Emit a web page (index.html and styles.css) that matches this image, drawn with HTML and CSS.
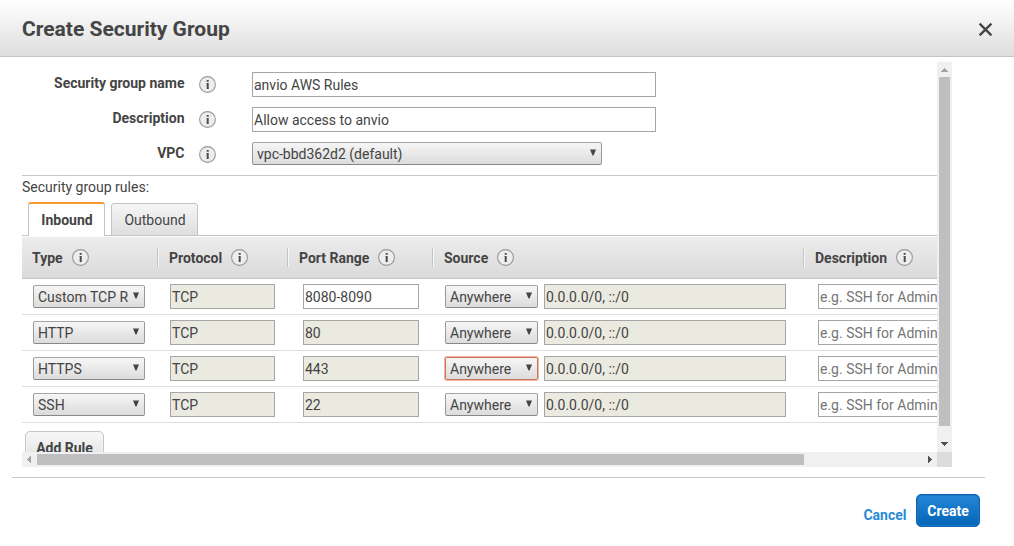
FILE: index.html
```html
<!DOCTYPE html>
<html lang="en">
<head>
<meta charset="utf-8">
<title>Create Security Group</title>
<link rel="stylesheet" href="styles.css">
</head>
<body>
<svg width="0" height="0" class="defs" aria-hidden="true">
  <symbol id="info" viewBox="0 0 17 17">
    <circle cx="8.5" cy="8.5" r="7.9" fill="#ededed" stroke="#999" stroke-width="1.1"/>
    <path d="M7.7 4h2v1.8h-2zM7.7 7h2v6h-2z" fill="#4a4a4a"/>
    <path d="M7 7h.7v.9H7z" fill="#999"/>
  </symbol>
  <symbol id="caret" viewBox="0 0 6 7">
    <path d="M0 0.5h6L3.5 6.5h-1z" fill="#444"/>
  </symbol>
</svg>
<div class="dialog">
  <header class="dialog-header">
    <h1>Create Security Group</h1>
    <svg class="close" viewBox="0 0 13 13"><path d="M0.6 0.6L12.4 12.4M12.4 0.6L0.6 12.4" stroke="#444" stroke-width="2.3" fill="none"/></svg>
  </header>

  <main class="scroller">
    <div class="viewport">
      <section class="form">
        <div class="form-row"><label>Security group name</label><svg class="info"><use href="#info"/></svg><div class="input">anvio AWS Rules</div></div>
        <div class="form-row"><label>Description</label><svg class="info"><use href="#info"/></svg><div class="input">Allow access to anvio</div></div>
        <div class="form-row"><label>VPC</label><svg class="info"><use href="#info"/></svg><div class="select vpc"><span>vpc-bbd362d2 (default)</span><svg class="caret"><use href="#caret"/></svg></div></div>
      </section>
      <div class="rules-title">Security group rules:</div>
      <nav class="tabs"><div class="tab active">Inbound</div><div class="tab">Outbound</div></nav>
      <section class="table">
        <div class="table-head">
          <div class="th">Type<svg class="info"><use href="#info"/></svg></div>
          <div class="th">Protocol<svg class="info"><use href="#info"/></svg></div>
          <div class="th">Port Range<svg class="info"><use href="#info"/></svg></div>
          <div class="th">Source<svg class="info"><use href="#info"/></svg></div>
          <div class="th">Description<svg class="info"><use href="#info"/></svg></div>
        </div>
        <div class="table-row">
          <div class="select"><span>Custom TCP R</span><svg class="caret"><use href="#caret"/></svg></div>
          <div class="input off">TCP</div><div class="input">8080-8090</div>
          <div class="select"><span>Anywhere</span><svg class="caret"><use href="#caret"/></svg></div>
          <div class="input off">0.0.0.0/0, ::/0</div><div class="input hint">e.g. SSH for Admin</div>
        </div>
        <div class="table-row">
          <div class="select"><span>HTTP</span><svg class="caret"><use href="#caret"/></svg></div>
          <div class="input off">TCP</div><div class="input off">80</div>
          <div class="select"><span>Anywhere</span><svg class="caret"><use href="#caret"/></svg></div>
          <div class="input off">0.0.0.0/0, ::/0</div><div class="input hint">e.g. SSH for Admin</div>
        </div>
        <div class="table-row">
          <div class="select"><span>HTTPS</span><svg class="caret"><use href="#caret"/></svg></div>
          <div class="input off">TCP</div><div class="input off">443</div>
          <div class="select focus"><span>Anywhere</span><svg class="caret"><use href="#caret"/></svg></div>
          <div class="input off">0.0.0.0/0, ::/0</div><div class="input hint">e.g. SSH for Admin</div>
        </div>
        <div class="table-row">
          <div class="select"><span>SSH</span><svg class="caret"><use href="#caret"/></svg></div>
          <div class="input off">TCP</div><div class="input off">22</div>
          <div class="select"><span>Anywhere</span><svg class="caret"><use href="#caret"/></svg></div>
          <div class="input off">0.0.0.0/0, ::/0</div><div class="input hint">e.g. SSH for Admin</div>
        </div>
      </section>
      <div class="add-rule">Add Rule</div>
    </div>
    <div class="vbar">
      <svg viewBox="0 0 15 15" shape-rendering="crispEdges"><path d="M4 10L7.5 6L11 10z" fill="#a3a3a3"/></svg>
      <div class="vthumb"></div>
      <svg viewBox="0 0 15 15" shape-rendering="crispEdges"><path d="M4 5L7.5 9L11 5z" fill="#505050"/></svg>
    </div>
    <div class="hbar">
      <svg viewBox="0 0 15 15" shape-rendering="crispEdges"><path d="M9 4L5 7.5L9 11z" fill="#a3a3a3"/></svg>
      <div class="hthumb"></div>
      <svg viewBox="0 0 15 15" shape-rendering="crispEdges"><path d="M6 4L10 7.5L6 11z" fill="#505050"/></svg>
    </div>
    <div class="corner"></div>
  </main>

  <footer class="dialog-footer">
    <a class="cancel">Cancel</a>
    <div class="create">Create</div>
  </footer>
</div>
</body>
</html>
```

FILE: styles.css
```css
* { box-sizing: border-box; }
body {
  margin: 0;
  background: #fff;
  color: #444;
  font: 14px/18px Roboto, "Liberation Sans", sans-serif;
}
.defs { display: none; }
.dialog { width: 1014px; height: 546px; overflow: hidden; }

.dialog-header {
  display: flex;
  justify-content: space-between;
  align-items: center;
  height: 57px;
  padding: 0 22px;
  border-bottom: 1px solid #c4c4c4;
  background: linear-gradient(#fff, #dedede);
}
h1 { margin: 1px 0 0; font-size: 21px; line-height: 28px; font-weight: 700; }
.close { width: 13px; height: 13px; margin: 3px 0 0; }

.scroller {
  display: grid;
  grid-template: 390px 15px / 915px 15px;
  margin: 5px 0 0 22px;
}
.viewport { overflow: hidden; }

.form {
  display: flex;
  flex-direction: column;
  gap: 10px;
  height: 114px;
  padding-top: 10px;
  border-bottom: 1px solid #c8c8c8;
}
.form-row {
  display: grid;
  grid-template-columns: 163px 17px 404px;
  column-gap: 14px;
  height: 25px;
  align-items: start;
}
.form-row > :last-child { margin-left: 22px; width: 404px; }
.form-row > .vpc { width: 350px; }
.form-row label { text-align: right; font-weight: 700; padding: 2px 0.5px 0 0; }
.form-row .info { margin-top: 4px; }
.info { width: 17px; height: 17px; flex: none; }

.input {
  height: 25px;
  padding-left: 1px;
  border: 1px solid #a6a6a6;
  background: #fff;
  line-height: 24px;
  white-space: nowrap;
}
.off { background: #eaeae1; }
.hint { color: #757575; }
.select {
  display: flex;
  justify-content: space-between;
  height: 23px;
  padding: 0 5px 0 4px;
  border: 1px solid #999;
  border-color: #a6a6a6 #999 #888;
  border-radius: 2px;
  background: linear-gradient(#f6f6f6, #dcdcdc);
  line-height: 22px;
  white-space: nowrap;
}
.caret { width: 6px; height: 7px; margin-top: 6px; flex: none; }
.focus { border-color: #c9755c; box-shadow: 0 0 0 1px #f5b5a1; }

.rules-title { height: 26px; padding-top: 2px; }
.tabs {
  display: flex;
  gap: 6px;
  height: 34px;
  padding: 0 6px;
  align-items: flex-end;
  box-shadow: inset 0 -1px #c4c4c4;
}
.tab {
  width: 87px;
  height: 33px;
  border: 1px solid #c4c4c4;
  border-radius: 3px 3px 0 0;
  background: linear-gradient(#f6f6f6, #dedede);
  padding-left: 1px;
  text-align: center;
  line-height: 33px;
}
.tab.active {
  width: 77px;
  height: 34px;
  border-top: 2px solid #f8992f;
  border-bottom: 0;
  background: #fff;
  font-weight: 700;
}

.table { width: 1100px; }
.table-head {
  display: grid;
  grid-template-columns: 135px 130px 145px 371px 300px;
  align-items: center;
  height: 43px;
  border-top: 1px solid #fff;
  border-bottom: 1px solid #c4c4c4;
  background: linear-gradient(#ececec, #dadada);
}
.th {
  display: flex;
  align-items: center;
  gap: 9px;
  height: 19px;
  padding-left: 11px;
  border-left: 1px solid #c4c4c4;
  box-shadow: inset 1px 0 #f7f7f7;
  font-weight: 700;
}
.th:first-child { padding-left: 10px; border: 0; box-shadow: none; }
.table-row {
  display: grid;
  grid-template-columns: 137px 133px 142px 99px 274px 280px;
  align-items: center;
  height: 36px;
  padding-left: 11px;
  border-bottom: 1px solid #ddd;
}
.table-row > :nth-child(1) { width: 112px; }
.table-row > :nth-child(2) { width: 105px; }
.table-row > :nth-child(3) { width: 116px; }
.table-row > :nth-child(4) { width: 93px; }
.table-row > :nth-child(5) { width: 242px; }

.add-rule {
  width: 79px;
  height: 33px;
  margin: 8px 0 0 3px;
  border: 1px solid #c4c4c4;
  border-radius: 5px;
  background: linear-gradient(#f8f8f8, #dedede);
  box-shadow: inset 0 0 0 1px #f4f4f4;
  font-weight: 700;
  line-height: 32px;
  text-align: center;
}

.vbar, .hbar { display: flex; background: #f0f0f0; }
.vbar { flex-direction: column; justify-content: space-between; }
.hbar { justify-content: space-between; }
.vbar svg, .hbar svg { width: 15px; height: 15px; flex: none; }
.vthumb { width: 11px; height: 349px; margin: 0 auto auto 2px; background: #bfbfbf; }
.hthumb { width: 767px; height: 11px; margin: 2px auto 0 0; background: #bfbfbf; }
.corner { background: #dcdcdc; }

.dialog-footer {
  display: flex;
  justify-content: flex-end;
  align-items: flex-start;
  gap: 9.5px;
  width: 973px;
  margin: 10px 0 0 12px;
  padding: 16px 5px 0 0;
  border-top: 1px solid #c8c8c8;
  font-weight: 700;
}
.cancel { margin-top: 12px; color: #2a8ad8; }
.create {
  width: 64px;
  height: 33px;
  border: 1px solid #0d65b2;
  border-radius: 5px;
  background: linear-gradient(#2587d9, #0464b5);
  box-shadow: inset 0 0 0 1px #1a78c6;
  color: #fff;
  line-height: 32px;
  text-align: center;
}
```
